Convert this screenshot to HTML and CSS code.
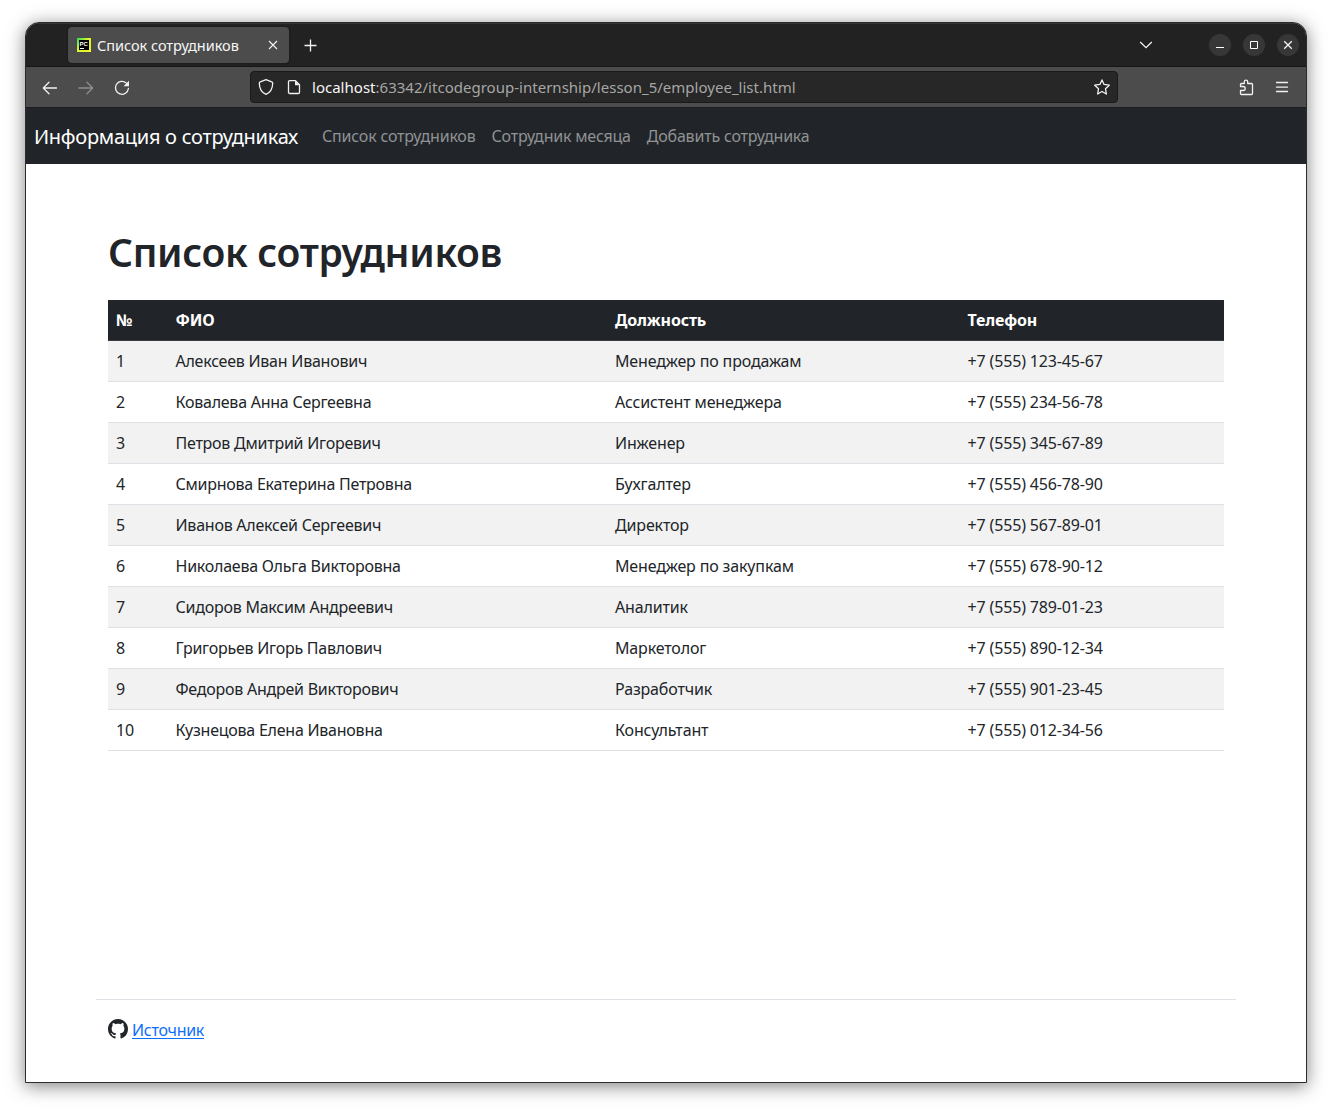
FILE: index.html
```html
<!DOCTYPE html>
<html lang="ru">
<head>
<meta charset="utf-8">
<title>Список сотрудников</title>
<link rel="stylesheet" href="styles.css">
</head>
<body>
<div class="window">
  <div class="titlebar">
    <div class="tab">
      <svg class="favicon" width="14" height="14" viewBox="0 0 14 14">
        <defs><linearGradient id="pc" x1="0" y1="0" x2="1" y2="1"><stop offset="0" stop-color="#21d765"/><stop offset=".4" stop-color="#d4f52c"/><stop offset="1" stop-color="#f5f52a"/></linearGradient></defs>
        <rect width="14" height="14" fill="url(#pc)"/>
        <rect x="2" y="2" width="10" height="10" fill="#000"/>
        <text class="favicon-text" x="2.500" y="7.500">PC</text>
        <path d="M3 10.500h4"/>
      </svg>
      <span class="tab-title">Список сотрудников</span>
      <svg class="tab-close" width="10" height="10" viewBox="0 0 10 10"><path d="M1 1l8 8M9 1L1 9"/></svg>
    </div>
    <svg class="new-tab" width="14" height="14" viewBox="0 0 14 14"><path d="M6.500 1.500v12M.5 7.500h12"/></svg>
    <svg class="chevron" width="14" height="8" viewBox="0 0 14 8"><path d="M1.200 1l5.800 5.600L12.800 1"/></svg>
    <div class="controls">
      <span class="control"><svg width="22" height="22" viewBox="0 0 22 22"><path class="thin" d="M7 13.500h8"/></svg></span>
      <span class="control"><svg width="22" height="22" viewBox="0 0 22 22"><path class="thin" d="M7.500 7.500h7v7h-7z"/></svg></span>
      <span class="control"><svg width="22" height="22" viewBox="0 0 22 22"><path d="M7.200 7.200l7.600 7.600M14.800 7.200l-7.600 7.600"/></svg></span>
    </div>
  </div>
  <div class="toolbar">
    <svg class="tool" width="16" height="16" viewBox="0 0 16 16"><path d="M14.500 8H1.500M7 2.300L1.300 8 7 13.700"/></svg>
    <svg class="tool disabled" width="16" height="16" viewBox="0 0 16 16"><path d="M1 8h13.500M9 2.300L14.700 8 9 13.700"/></svg>
    <svg class="tool" width="16" height="16" viewBox="0 0 16 16"><path d="M14.400 8.500a6.500 6.500 0 1 1-2-5.400l1.100 1.100"/><path class="solid" d="M15 .8v5.400H9.500z"/></svg>
    <div class="address">
      <svg class="tool" width="16" height="16" viewBox="0 0 16 16"><path d="M8 .700l5.700 2.200c.7.300 1 .8 1 1.400C14.600 9.500 12.500 13.500 8 15.400 3.500 13.500 1.400 9.500 1.300 4.300c0-.6.300-1.100 1-1.400z"/></svg>
      <svg class="tool page-icon" width="16" height="16" viewBox="0 0 16 16"><path d="M3.700 1.600h5.800l4 4v7.700c0 .7-.5 1.200-1.200 1.200H3.700c-.7 0-1.200-.5-1.200-1.200V2.800c0-.7.5-1.200 1.200-1.200z"/><path class="solid" d="M9 1.500v4.700h4.800z"/></svg>
      <span class="url"><b>localhost</b>:63342/itcodegroup-internship/lesson_5/employee_list.html</span>
      <svg class="tool star" width="16" height="16" viewBox="0 0 16 16"><path d="M8 .9l2.100 4.500 5.200.8-3.800 3.600.9 5.200L8 12.500l-4.400 2.500.9-5.200L.7 6.200l5.200-.8z"/></svg>
    </div>
    <svg class="tool puzzle" width="16" height="16" viewBox="0 0 16 16"><path d="M2.500 6.500V4.400c0-.5.400-.9.900-.9h2.900V1.800a1.700 1.700 0 0 1 3.400 0v1.700h3.900c.5 0 .9.400.9.900v9.200c0 .5-.4.900-.9.900H3.400c-.5 0-.9-.4-.9-.9v-3.100h2.700a2 2 0 0 0 0-4H2.500z"/></svg>
    <svg class="tool" width="16" height="16" viewBox="0 0 16 16"><path d="M2.500 2.500h11M2.500 7.200h11M2.500 11.500h11"/></svg>
  </div>
  <nav class="navbar">
    <a class="brand">Информация о сотрудниках</a>
    <a class="nav-link">Список сотрудников</a>
    <a class="nav-link">Сотрудник месяца</a>
    <a class="nav-link">Добавить сотрудника</a>
  </nav>
  <main class="content">
    <h1>Список сотрудников</h1>
    <table>
      <colgroup><col class="c-num"><col class="c-name"><col class="c-job"><col class="c-phone"></colgroup>
      <thead><tr><th>№</th><th>ФИО</th><th>Должность</th><th>Телефон</th></tr></thead>
      <tbody>
        <tr><td>1</td><td>Алексеев Иван Иванович</td><td>Менеджер по продажам</td><td>+7 (555) 123-45-67</td></tr>
        <tr><td>2</td><td>Ковалева Анна Сергеевна</td><td>Ассистент менеджера</td><td>+7 (555) 234-56-78</td></tr>
        <tr><td>3</td><td>Петров Дмитрий Игоревич</td><td>Инженер</td><td>+7 (555) 345-67-89</td></tr>
        <tr><td>4</td><td>Смирнова Екатерина Петровна</td><td>Бухгалтер</td><td>+7 (555) 456-78-90</td></tr>
        <tr><td>5</td><td>Иванов Алексей Сергеевич</td><td>Директор</td><td>+7 (555) 567-89-01</td></tr>
        <tr><td>6</td><td>Николаева Ольга Викторовна</td><td>Менеджер по закупкам</td><td>+7 (555) 678-90-12</td></tr>
        <tr><td>7</td><td>Сидоров Максим Андреевич</td><td>Аналитик</td><td>+7 (555) 789-01-23</td></tr>
        <tr><td>8</td><td>Григорьев Игорь Павлович</td><td>Маркетолог</td><td>+7 (555) 890-12-34</td></tr>
        <tr><td>9</td><td>Федоров Андрей Викторович</td><td>Разработчик</td><td>+7 (555) 901-23-45</td></tr>
        <tr><td>10</td><td>Кузнецова Елена Ивановна</td><td>Консультант</td><td>+7 (555) 012-34-56</td></tr>
      </tbody>
    </table>
  </main>
  <footer class="footer">
    <svg width="20" height="20" viewBox="0 0 16 16"><path d="M8 0C3.580 0 0 3.580 0 8c0 3.540 2.290 6.530 5.470 7.590.4.070.55-.17.55-.38 0-.19-.01-.82-.01-1.490-2.010.37-2.530-.49-2.690-.94-.09-.23-.48-.94-.82-1.130-.28-.15-.68-.52-.01-.53.63-.01 1.080.58 1.230.82.72 1.210 1.870.87 2.330.66.070-.52.28-.87.51-1.070-1.780-.2-3.640-.89-3.640-3.950 0-.87.31-1.590.82-2.150-.08-.2-.36-1.020.08-2.120 0 0 .67-.21 2.200.82.64-.18 1.320-.27 2-.27s1.360.09 2 .27c1.530-1.040 2.200-.82 2.200-.82.44 1.100.16 1.920.08 2.120.51.56.82 1.270.82 2.150 0 3.070-1.870 3.750-3.650 3.950.29.25.54.73.54 1.480 0 1.070-.01 1.930-.01 2.200 0 .21.15.46.55.38A8.010 8.010 0 0 0 16 8c0-4.420-3.580-8-8-8z"/></svg>
    <a class="source">Источник</a>
  </footer>
</div>
</body>
</html>
```
FILE: styles.css
```css
* { box-sizing: border-box; }
body {
  margin: 0;
  height: 1111px;
  padding: 22px 25px 28px;
  background: #fff;
  color: #212529;
  font: 16px/24px "Noto Sans", "Open Sans", sans-serif;
  overflow: hidden;
  white-space: nowrap;
}
svg path { fill: none; }
.window {
  display: flex;
  flex-direction: column;
  height: 1061px;
  border: 1px solid #2c2c2c;
  border-radius: 14px 14px 0 0;
  background: #fff;
  overflow: hidden;
  box-shadow: 0 3px 18px rgba(0, 0, 0, .5);
}
.titlebar {
  display: flex;
  align-items: center;
  height: 44px;
  flex: none;
  padding: 0 7px 0 42px;
  background: #222;
  border-top: 1px solid #353535;
  border-bottom: 1px solid #161616;
}
.titlebar path { stroke: #f3f3f3; stroke-width: 1.3; }
.titlebar .thin { stroke: #fff; stroke-width: 1; }
.tab {
  display: flex;
  align-items: center;
  width: 221px;
  height: 36px;
  padding: 0 11px 0 9px;
  border-radius: 4px;
  background: #4c4c4c;
  box-shadow: 0 0 2px #111;
}
.favicon-text { font: bold 6px "Liberation Sans", sans-serif; fill: #fff; }
.tab .favicon path { stroke: #fff; stroke-width: 1; }
.tab-title { margin-left: 6px; color: #f6f6f6; font-size: 14.500px; letter-spacing: -.03px; }
.tab-close { margin-left: auto; }
.tab .tab-close path { stroke-width: 1.1; }
.new-tab { margin-left: 15px; }
.chevron { margin-left: auto; }
.controls { display: flex; gap: 12px; margin-left: 56px; }
.control { width: 22px; height: 22px; border-radius: 50%; background: #373737; }
.control svg { display: block; }
.toolbar {
  display: flex;
  align-items: center;
  height: 41px;
  flex: none;
  padding: 0 16px;
  gap: 20px;
  background: #4c4c4c;
  border-bottom: 1px solid #1c1c1c;
}
.toolbar > .tool { margin-top: 1px; }
.tool { flex: none; overflow: visible; }
.tool path { stroke: #f1f1f1; stroke-width: 1.3; stroke-linejoin: round; stroke-linecap: round; }
.tool .solid { fill: #f1f1f1; stroke: none; }
.disabled { opacity: .4; }
.address {
  display: flex;
  align-items: center;
  width: 868px;
  height: 32px;
  margin-left: 100px;
  padding: 0 7px;
  border: 1px solid #191919;
  border-radius: 4px;
  background: #272727;
}
.page-icon { margin-left: 12px; }
.url { margin-left: 10px; color: #a6a6a6; font-size: 15px; letter-spacing: .015px; }
.url b { color: #f6f6f6; font-weight: 400; }
.star { margin-left: auto; }
.puzzle { margin-left: auto; }
.navbar {
  display: flex;
  align-items: center;
  height: 56px;
  flex: none;
  padding-left: 8px;
  background: #212529;
}
.brand { margin-right: 16px; padding-top: 1px; color: #fff; font-size: 20px; letter-spacing: -.27px; }
.nav-link { padding: 0 8px; color: #909294; letter-spacing: -.2px; }
.content { padding: 64px 82px 0; }
h1 { margin: 0 0 24px; font-size: 39px; line-height: 48px; font-weight: 600; letter-spacing: -.32px; }
table { width: 1116px; border-collapse: separate; border-spacing: 0; table-layout: fixed; }
.c-num { width: 59.500px; }
.c-name { width: 439.500px; }
.c-job { width: 352.500px; }
.c-phone { width: 264.500px; }
th, td { height: 41px; padding: 8px; text-align: left; border-bottom: 1px solid #dee2e6; letter-spacing: -.15px; }
td:nth-child(2) { letter-spacing: -.24px; }
th { background: #212529; color: #fff; border-color: #373b3e; font-weight: 700; }
tbody tr:nth-child(odd) td { background: #f2f2f2; }
.footer {
  display: flex;
  gap: 4px;
  height: 83px;
  margin: auto 70px 0;
  padding: 19px 12px 0;
  border-top: 1px solid #dee2e6;
}
.footer svg path { fill: #212529; }
.source { margin-top: -1px; color: #0d6efd; letter-spacing: -.28px; text-decoration: underline; text-underline-offset: 2px; }
```
